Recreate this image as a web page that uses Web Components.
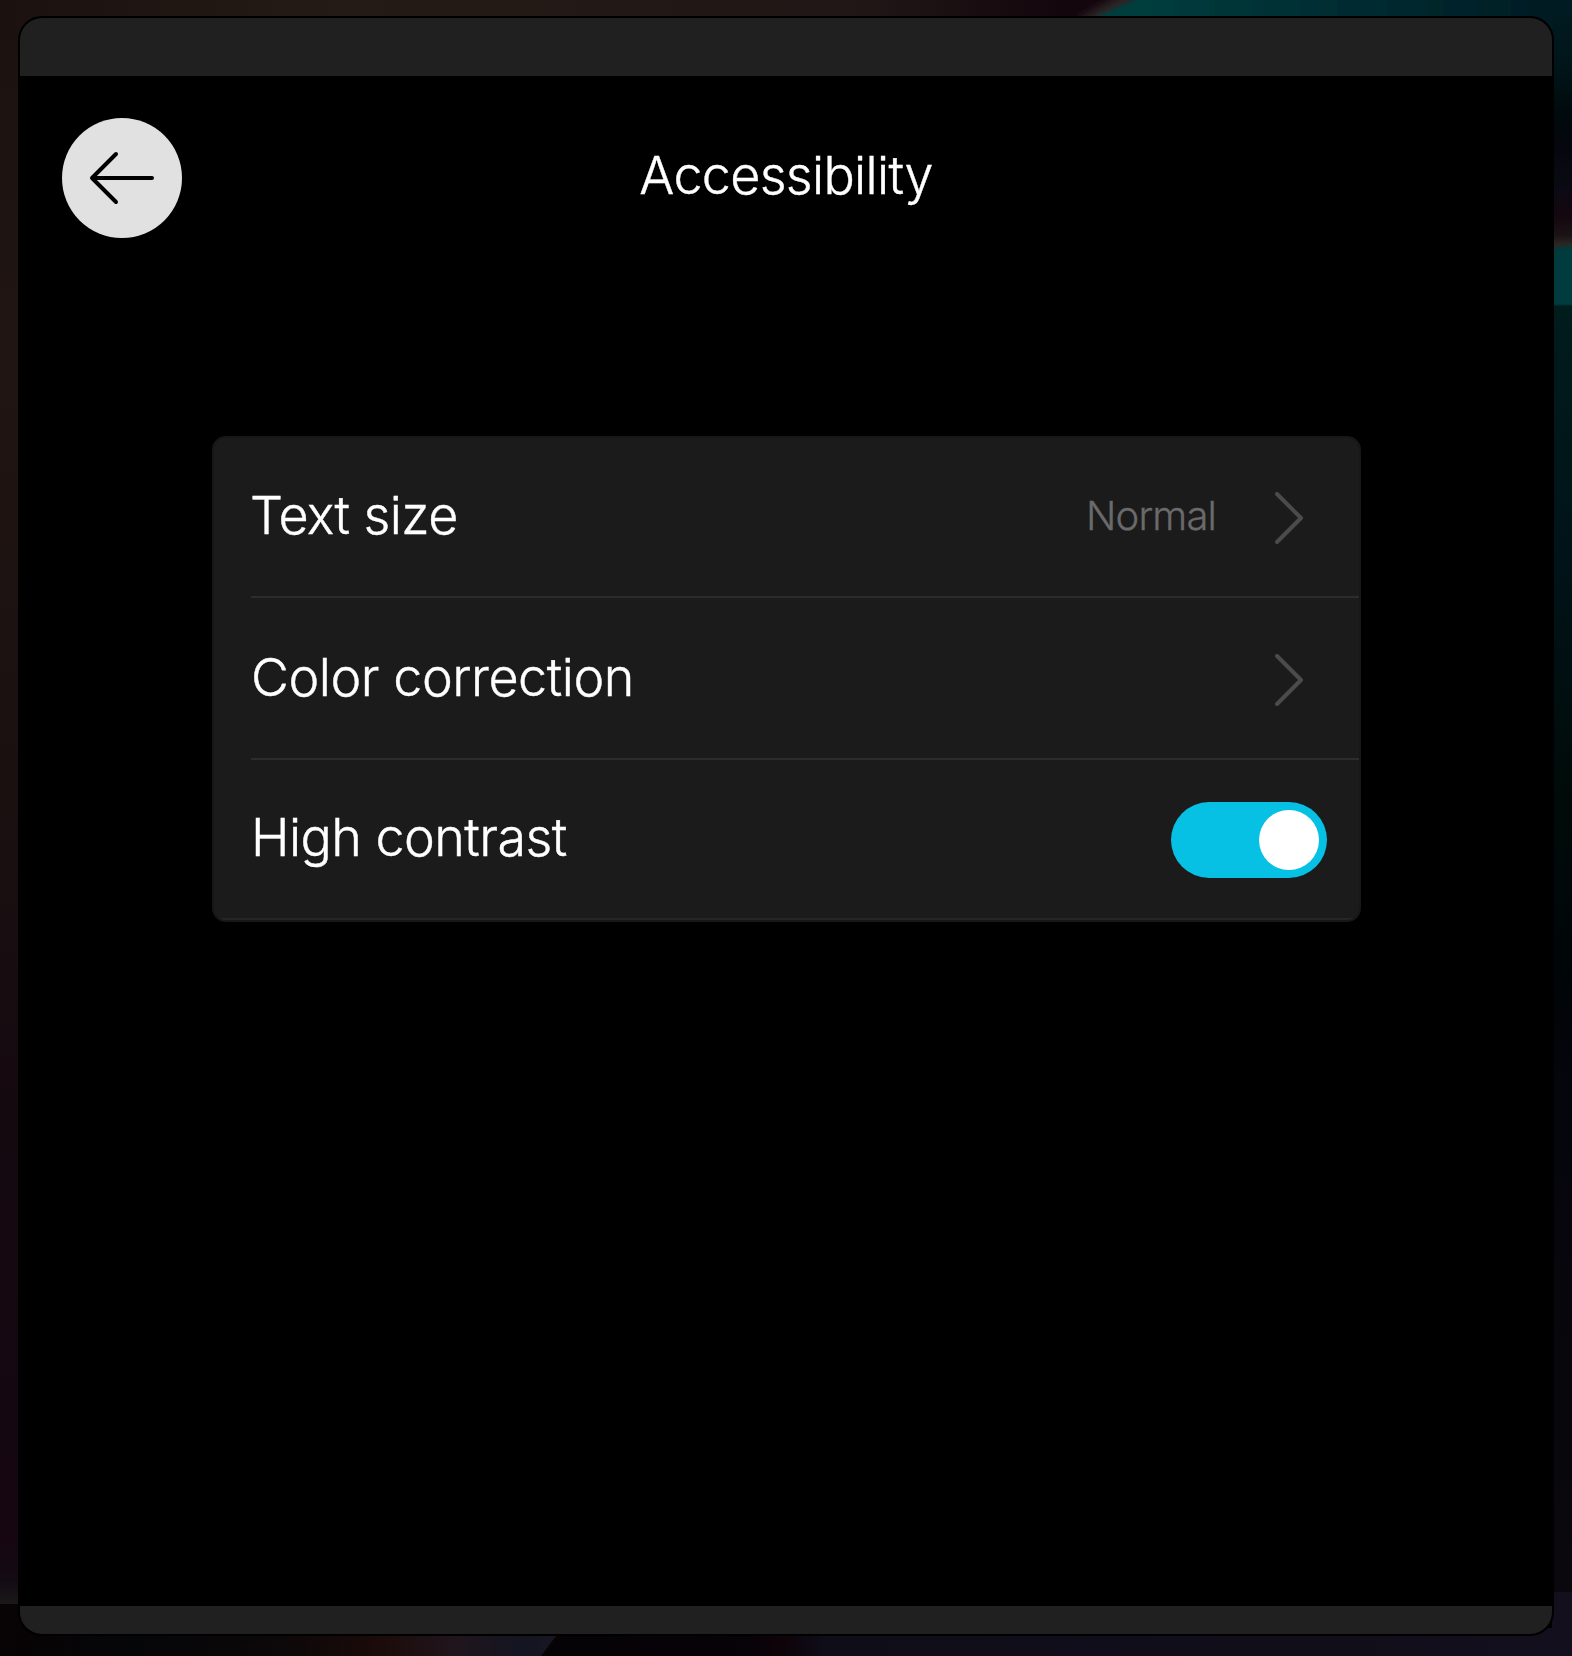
<!DOCTYPE html>
<html lang="en">
<head>
<meta charset="utf-8">
<title>Accessibility</title>
<style>
  html, body { margin: 0; height: 100%; background: #000; }
  body { font-family: Inter, "Liberation Sans", sans-serif; font-weight: 300; font-feature-settings: "ss07"; -webkit-text-stroke: .4px currentColor; color: #fff; overflow: hidden; }
</style>
</head>
<body>
<desktop-scene>
  <settings-window>
    <page-header slot="header">Accessibility</page-header>
    <settings-card>
      <settings-row><row-label style="--track:-.6px;--indent:-1px;--lift:2px">Text size</row-label><row-value slot="end">Normal</row-value><chevron-icon slot="end"></chevron-icon></settings-row>
      <settings-row tall><row-label style="--track:-.45px">Color correction</row-label><chevron-icon slot="end"></chevron-icon></settings-row>
      <settings-row last><row-label style="--track:-.55px;--lift:2px">High contrast</row-label><toggle-switch slot="end"></toggle-switch></settings-row>
    </settings-card>
  </settings-window>
</desktop-scene>
<script>
const define = (name, html) => {
  const template = document.createElement('template');
  template.innerHTML = html;
  customElements.define(name, class extends HTMLElement {
    constructor() {
      super();
      this.attachShadow({ mode: 'open' }).append(template.content.cloneNode(true));
    }
  });
};

// Dark wallpaper behind the window; only its edges are visible.
define('desktop-scene', `
<style>
  :host { display: grid; width: 1572px; height: 1656px; }
  svg, main { grid-area: 1 / 1; }
  svg { display: block; }
  main { display: flex; padding: 16px 18px 20px; z-index: 1; }
</style>
<svg width="1572" height="1656" viewBox="0 0 1572 1656" aria-hidden="true">
  <defs>
    <linearGradient id="left" x2="0" y2="1">
      <stop stop-color="#1b1210"/><stop offset=".22" stop-color="#201512"/><stop offset=".5" stop-color="#1a1010"/>
      <stop offset=".7" stop-color="#150910"/><stop offset=".96" stop-color="#150612"/><stop offset=".985" stop-color="#130b13"/><stop offset="1" stop-color="#1a181a"/>
    </linearGradient>
    <linearGradient id="top"><stop stop-color="#1b1210"/><stop offset=".3" stop-color="#241b16"/><stop offset=".75" stop-color="#201716"/><stop offset=".93" stop-color="#14060d"/><stop offset="1" stop-color="#14060d"/></linearGradient>
    <linearGradient id="teal"><stop stop-color="#00403e"/><stop offset=".2" stop-color="#003c3d"/><stop offset=".6" stop-color="#002a31"/><stop offset="1" stop-color="#001a20"/></linearGradient>
    <linearGradient id="upper" x2="0" y2="1">
      <stop stop-color="#001a20"/><stop offset=".2" stop-color="#00161b"/><stop offset=".42" stop-color="#000a0c"/><stop offset=".58" stop-color="#05070e"/>
      <stop offset=".74" stop-color="#0b0a14"/><stop offset=".86" stop-color="#15070f"/><stop offset=".94" stop-color="#1a1315"/><stop offset=".98" stop-color="#2a2725"/><stop offset="1" stop-color="#2a2725"/>
    </linearGradient>
    <linearGradient id="lower" x2="0" y2="1">
      <stop stop-color="#001c1c"/><stop offset=".2" stop-color="#001318"/><stop offset=".38" stop-color="#000b09"/><stop offset=".52" stop-color="#000508"/>
      <stop offset=".7" stop-color="#06060c"/><stop offset="1" stop-color="#0a080c"/>
    </linearGradient>
    <linearGradient id="floor"><stop stop-color="#080304"/><stop offset=".23" stop-color="#050608"/><stop offset=".5" stop-color="#0d0809"/><stop offset=".66" stop-color="#1c0b0a"/><stop offset=".78" stop-color="#20151c"/><stop offset=".9" stop-color="#141522"/><stop offset="1" stop-color="#1a1620"/></linearGradient>
    <linearGradient id="floor2"><stop stop-color="#050305"/><stop offset=".2" stop-color="#080209"/><stop offset=".23" stop-color="#0e0309"/><stop offset=".27" stop-color="#0e0d18"/><stop offset="1" stop-color="#130f1c"/></linearGradient>
    <filter id="soft" x="-50%" y="-80%" width="200%" height="260%"><feGaussianBlur stdDeviation="4"/></filter>
    <filter id="edge"><feGaussianBlur stdDeviation=".8"/></filter>
  </defs>
  <rect width="18" height="1604" fill="url(#left)"/>
  <rect width="1140" height="42" fill="url(#top)"/>
  <path d="M1138-6 1082 26" stroke="#2b2725" stroke-width="16" filter="url(#soft)"/>
  <path d="M1152-8H1590V42H1040Z" fill="url(#teal)" filter="url(#edge)"/>
  <rect x="1552" y="16" width="20" height="233" fill="url(#upper)"/>
  <path d="M1540 249.500 1580 245V306H1540Z" fill="#003a3c" filter="url(#edge)"/>
  <rect x="1552" y="306" width="20" height="1286" fill="url(#lower)"/>
  <rect y="1604" width="560" height="52" fill="#080304"/>
  <path d="M0 1604H580L541 1656H0Z" fill="url(#floor)"/>
  <path d="M566 1628H1572V1656H545Z" fill="url(#floor2)"/>
  <rect x="1552" y="1592" width="20" height="64" fill="#130f1c"/>
</svg>
<main><slot></slot></main>`);

define('settings-window', `
<style>
  :host { display: flex; flex-direction: column; flex: 1; box-sizing: border-box; border: 2px solid #000; border-radius: 24px; overflow: hidden; background: #000; }
  .cap { height: 58px; background: #202020; }
  .foot { height: 28px; background: #202020; }
  .body { flex: 1; display: flex; flex-direction: column; }
</style>
<div class="cap"></div>
<div class="body"><slot name="header"></slot><slot></slot></div>
<div class="foot"></div>`);

define('page-header', `
<style>
  :host { display: grid; grid-template-columns: 120px 1fr 120px; align-items: center; padding: 42px 42px 0; height: 120px; }
  button { width: 120px; height: 120px; padding: 0; border: 0; border-radius: 50%; background: #e1e1e1; }
  svg { display: block; }
  h1 { margin: 0; font-size: 52px; line-height: 64px; font-weight: inherit; text-align: center; padding-bottom: 4px; letter-spacing: -.67px; }
</style>
<button aria-label="Back"><svg width="120" height="120" viewBox="0 0 120 120" fill="none" stroke="#000" stroke-width="4" stroke-linecap="round" stroke-linejoin="round"><path d="M90 60H30M54 36 30 60 54 84"/></svg></button>
<h1><slot></slot></h1>`);

define('settings-card', `
<style>
  :host { display: block; margin: 198px 191px 0 192px; border: 2px solid #171717; border-radius: 14px; background: #1b1b1b; overflow: hidden; }
</style>
<slot></slot>`);

define('settings-row', `
<style>
  :host { display: flex; box-sizing: border-box; height: 160px; padding-left: 37px; }
  :host([tall]) { height: 162px; }
  .line { flex: 1; display: flex; align-items: center; justify-content: space-between; border-bottom: 2px solid #2c2c2c; }
  :host([last]) { padding-left: 0; }
  :host([last]) .line { padding-left: 37px; border-color: #262626; }
  .end { display: flex; align-items: center; padding-top: 2px; }
  :host([tall]) .end { padding-top: 4px; }
</style>
<div class="line"><slot></slot><div class="end"><slot name="end"></slot></div></div>`);

define('row-label', `
<style>:host { display: block; font-size: 52px; line-height: 64px; letter-spacing: var(--track, 0); margin-left: var(--indent, 0); padding-bottom: var(--lift, 0); white-space: nowrap; }</style><slot></slot>`);

define('row-value', `
<style>:host { display: block; font-size: 40px; line-height: 50px; color: #6a6a6a; -webkit-text-stroke: .3px #6a6a6a; margin: -4px 57px 0 0; letter-spacing: -.85px; }</style><slot></slot>`);

define('chevron-icon', `
<style>:host { display: block; margin-right: 54px; } svg { display: block; }</style>
<svg width="32" height="52" viewBox="0 0 32 52" fill="none" stroke="#4b4b4b" stroke-width="4" stroke-linecap="round" stroke-linejoin="round"><path d="M4 2 28 26 4 50"/></svg>`);

define('toggle-switch', `
<style>
  :host { display: flex; justify-content: flex-end; box-sizing: border-box; width: 156px; height: 76px; padding: 8px; margin-right: 32px; border-radius: 38px; background: #07c1e4; }
  i { width: 60px; height: 60px; border-radius: 50%; background: #fff; }
</style><i></i>`);
</script>
</body>
</html>
